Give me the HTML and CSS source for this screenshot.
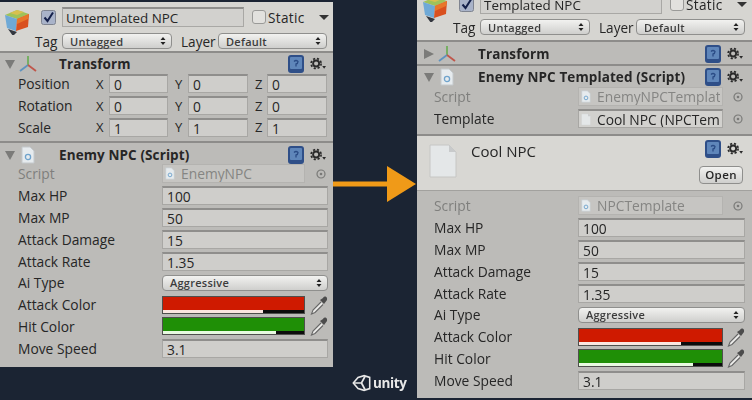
FILE: index.html
```html
<!DOCTYPE html>
<html lang="en">
<head>
<meta charset="utf-8">
<title>Unity Inspector: Untemplated vs Templated NPC</title>
<link rel="stylesheet" href="styles.css">
</head>
<body>
<svg class="defs" aria-hidden="true">
  <symbol id="cube" viewBox="0 0 26 26">
    <polygon points="1,6 13,1 25,5 13,10" fill="#9fc25a"/>
    <polygon points="6,4 13,1 20,3 13,6" fill="#d8c04f"/>
    <polygon points="1,6 13,10 12,22 3,19" fill="#6fa9d6"/>
    <polygon points="13,10 25,5 24,18 12,22" fill="#d9501f"/>
    <polygon points="13,10 25,5 24,10 13,15" fill="#e8762a"/>
    <polygon points="4,20 13,23 9,27" fill="#33373f"/>
  </symbol>
  <symbol id="check" viewBox="0 0 15 15">
    <rect x=".5" y=".5" width="14" height="14" rx="2" fill="#a9b3c9" stroke="#7f8490"/>
    <path d="M3.5 7.5 6.5 11 12 2.5" fill="none" stroke="#14204a" stroke-width="2"/>
  </symbol>
  <symbol id="tri-down" viewBox="0 0 10 10"><polygon points="0,1 10,1 5,10" fill="#7b7b79"/></symbol>
  <symbol id="tri-right" viewBox="0 0 10 10"><polygon points="0,0 10,5 0,10" fill="#7b7b79"/></symbol>
  <symbol id="axes" viewBox="0 0 18 18">
    <path d="M9 10V1" stroke="#6fae5a" stroke-width="1.8"/>
    <path d="M9 10 1 16" stroke="#5f93bf" stroke-width="1.8"/>
    <path d="M9 10 17 16" stroke="#c0564a" stroke-width="1.8"/>
  </symbol>
  <symbol id="script" viewBox="0 0 14 18">
    <path d="M1 1H9L13 5V17H1Z" fill="#e6ebee" stroke="#c4c9cc"/>
    <circle cx="7" cy="11" r="2.600" fill="none" stroke="#6fa3cc" stroke-width="1.300"/>
  </symbol>
  <symbol id="help" viewBox="0 0 16 18">
    <rect x="0" y="0" width="16" height="18" rx="3" fill="#2f4f88"/>
    <rect x="2" y="2" width="12" height="12" rx="1" fill="#5f86ba"/>
    <path d="M6 6.500Q8 4.500 10 6.500Q10 8.500 8 9V11.500" fill="none" stroke="#2b4c86" stroke-width="1.300"/>
  </symbol>
  <symbol id="gear" viewBox="0 0 17 14">
    <circle cx="6.500" cy="6.500" r="3.200" fill="none" stroke="#2a2a2a" stroke-width="2"/>
    <circle cx="6.500" cy="6.500" r="5.300" fill="none" stroke="#2a2a2a" stroke-width="1.800" stroke-dasharray="2.300 1.900"/>
    <polygon points="13,9 17,9 15,12" fill="#2a2a2a"/>
  </symbol>
  <symbol id="updown" viewBox="0 0 6 10">
    <path d="M0.500 4 3 1 5.500 4ZM0.500 6 3 9 5.500 6Z" fill="#222"/>
  </symbol>
  <symbol id="dropper" viewBox="0 0 18 20">
    <path d="M11 7 3 15 1.500 19 5 17.500 13 9.500" fill="#ececea" stroke="#666" stroke-width="1.100"/>
    <path d="M10 5 14 9 17 5Q17.500 2 15.500 1.500Q13.500 1 13 3Z" fill="#4c4c4c"/>
  </symbol>
  <symbol id="target" viewBox="0 0 10 10">
    <circle cx="5" cy="5" r="4" fill="none" stroke="#7a7a78" stroke-width="1.200"/>
    <circle cx="5" cy="5" r="1.300" fill="#7a7a78"/>
  </symbol>
  <symbol id="page" viewBox="0 0 28 34">
    <path d="M1 1H20L27 8V33H1Z" fill="#e4e7e8" stroke="#c6c6c4"/>
    <path d="M20 1 27 8H20Z" fill="#c8cacb"/>
  </symbol>
</svg>

<main class="stage">
  <section class="panel panel-left">
    <header class="go-header">
      <div class="go-top">
        <svg class="i-cube"><use href="#cube"/></svg>
        <div class="go-fields">
          <div class="name-row">
            <svg class="i-check"><use href="#check"/></svg>
            <div class="name-field">Untemplated NPC</div>
            <span class="static-box"></span>
            <span class="static-label">Static</span>
            <span class="caret"></span>
          </div>
        </div>
      </div>
      <div class="tag-row">
        <span class="tag-label">Tag</span>
        <div class="select sel-tag">Untagged<svg class="i-ud"><use href="#updown"/></svg></div>
        <span class="layer-label">Layer</span>
        <div class="select sel-layer">Default<svg class="i-ud"><use href="#updown"/></svg></div>
      </div>
    </header>

    <div class="comp comp-transform">
      <div class="comp-head">
        <svg class="i-tri"><use href="#tri-down"/></svg>
        <svg class="i-axes"><use href="#axes"/></svg>
        <span class="comp-title">Transform</span>
        <svg class="i-help"><use href="#help"/></svg>
        <svg class="i-gear"><use href="#gear"/></svg>
      </div>
      <div class="row"><span class="lbl">Position</span><div class="xyz"><span class="ax">X</span><div class="field">0</div><span class="ax">Y</span><div class="field">0</div><span class="ax">Z</span><div class="field">0</div></div></div>
      <div class="row"><span class="lbl">Rotation</span><div class="xyz"><span class="ax">X</span><div class="field">0</div><span class="ax">Y</span><div class="field">0</div><span class="ax">Z</span><div class="field">0</div></div></div>
      <div class="row"><span class="lbl">Scale</span><div class="xyz"><span class="ax">X</span><div class="field">1</div><span class="ax">Y</span><div class="field">1</div><span class="ax">Z</span><div class="field">1</div></div></div>
    </div>

    <div class="comp comp-script">
      <div class="comp-head">
        <svg class="i-tri"><use href="#tri-down"/></svg>
        <svg class="i-script"><use href="#script"/></svg>
        <span class="comp-title">Enemy NPC (Script)</span>
        <svg class="i-help"><use href="#help"/></svg>
        <svg class="i-gear"><use href="#gear"/></svg>
      </div>
      <div class="row dim"><span class="lbl">Script</span><div class="val val-obj"><div class="objfield"><svg class="i-mini"><use href="#script"/></svg><span>EnemyNPC</span></div><svg class="i-target"><use href="#target"/></svg></div></div>
      <div class="row"><span class="lbl">Max HP</span><div class="val"><div class="field">100</div></div></div>
      <div class="row"><span class="lbl">Max MP</span><div class="val"><div class="field">50</div></div></div>
      <div class="row"><span class="lbl">Attack Damage</span><div class="val"><div class="field">15</div></div></div>
      <div class="row"><span class="lbl">Attack Rate</span><div class="val"><div class="field">1.35</div></div></div>
      <div class="row"><span class="lbl">Ai Type</span><div class="val"><div class="select sel-full">Aggressive<svg class="i-ud"><use href="#updown"/></svg></div></div></div>
      <div class="row"><span class="lbl">Attack Color</span><div class="val val-obj"><div class="swatch swatch-red"><span class="alpha alpha-red"></span></div><svg class="i-dropper"><use href="#dropper"/></svg></div></div>
      <div class="row"><span class="lbl">Hit Color</span><div class="val val-obj"><div class="swatch swatch-green"><span class="alpha alpha-green"></span></div><svg class="i-dropper"><use href="#dropper"/></svg></div></div>
      <div class="row"><span class="lbl">Move Speed</span><div class="val"><div class="field">3.1</div></div></div>
    </div>
  </section>

  <div class="middle">
    <svg class="arrow" viewBox="0 0 84 38" aria-hidden="true">
      <rect x="0" y="16.500" width="56" height="5" fill="#f09a18"/>
      <polygon points="54,1 83,19 54,37" fill="#f09a18"/>
    </svg>
    <div class="unity">
      <svg class="i-unity" viewBox="0 0 22 20" aria-hidden="true">
        <path d="M1.500 10 7 3.500 14 1.500 20.500 3.500 20.500 16.500 14 18.500 7 16.500Z" fill="none" stroke="#e8e8e8" stroke-width="1.800"/>
        <path d="M1.500 10H11L15 2.500M11 10 15 17.500" fill="none" stroke="#e8e8e8" stroke-width="2"/>
      </svg>
      <span class="unity-word">unity</span>
    </div>
  </div>

  <section class="panel panel-right">
    <header class="go-header">
      <div class="go-top">
        <svg class="i-cube"><use href="#cube"/></svg>
        <div class="go-fields">
          <div class="name-row">
            <svg class="i-check"><use href="#check"/></svg>
            <div class="name-field">Templated NPC</div>
            <span class="static-box"></span>
            <span class="static-label">Static</span>
            <span class="caret"></span>
          </div>
        </div>
      </div>
      <div class="tag-row">
        <span class="tag-label">Tag</span>
        <div class="select sel-tag">Untagged<svg class="i-ud"><use href="#updown"/></svg></div>
        <span class="layer-label">Layer</span>
        <div class="select sel-layer">Default<svg class="i-ud"><use href="#updown"/></svg></div>
      </div>
    </header>

    <div class="comp comp-collapsed">
      <div class="comp-head">
        <svg class="i-tri"><use href="#tri-right"/></svg>
        <svg class="i-axes"><use href="#axes"/></svg>
        <span class="comp-title">Transform</span>
        <svg class="i-help"><use href="#help"/></svg>
        <svg class="i-gear"><use href="#gear"/></svg>
      </div>
    </div>

    <div class="comp comp-templated">
      <div class="comp-head">
        <svg class="i-tri"><use href="#tri-down"/></svg>
        <svg class="i-script"><use href="#script"/></svg>
        <span class="comp-title">Enemy NPC Templated (Script)</span>
        <svg class="i-help"><use href="#help"/></svg>
        <svg class="i-gear"><use href="#gear"/></svg>
      </div>
      <div class="row dim"><span class="lbl">Script</span><div class="val val-obj"><div class="objfield"><svg class="i-mini"><use href="#script"/></svg><span class="clip">EnemyNPCTemplate</span></div><svg class="i-target"><use href="#target"/></svg></div></div>
      <div class="row"><span class="lbl">Template</span><div class="val val-obj"><div class="objfield obj-live"><svg class="i-mini"><use href="#page"/></svg><span class="clip">Cool NPC (NPCTemplate)</span></div><svg class="i-target"><use href="#target"/></svg></div></div>
    </div>

    <div class="asset-head">
      <svg class="i-page"><use href="#page"/></svg>
      <span class="asset-title">Cool NPC</span>
      <div class="asset-tools">
        <div class="asset-icons">
          <svg class="i-help"><use href="#help"/></svg>
          <svg class="i-gear"><use href="#gear"/></svg>
        </div>
        <div class="open-btn">Open</div>
      </div>
    </div>

    <div class="comp comp-asset">
      <div class="row dim"><span class="lbl">Script</span><div class="val val-obj"><div class="objfield"><svg class="i-mini"><use href="#script"/></svg><span>NPCTemplate</span></div><svg class="i-target"><use href="#target"/></svg></div></div>
      <div class="row"><span class="lbl">Max HP</span><div class="val"><div class="field">100</div></div></div>
      <div class="row"><span class="lbl">Max MP</span><div class="val"><div class="field">50</div></div></div>
      <div class="row"><span class="lbl">Attack Damage</span><div class="val"><div class="field">15</div></div></div>
      <div class="row"><span class="lbl">Attack Rate</span><div class="val"><div class="field">1.35</div></div></div>
      <div class="row"><span class="lbl">Ai Type</span><div class="val"><div class="select sel-full">Aggressive<svg class="i-ud"><use href="#updown"/></svg></div></div></div>
      <div class="row"><span class="lbl">Attack Color</span><div class="val val-obj"><div class="swatch swatch-red"><span class="alpha alpha-red"></span></div><svg class="i-dropper"><use href="#dropper"/></svg></div></div>
      <div class="row"><span class="lbl">Hit Color</span><div class="val val-obj"><div class="swatch swatch-green"><span class="alpha alpha-green"></span></div><svg class="i-dropper"><use href="#dropper"/></svg></div></div>
      <div class="row"><span class="lbl">Move Speed</span><div class="val"><div class="field">3.1</div></div></div>
    </div>
  </section>
</main>
</body>
</html>
```

FILE: styles.css
```css
* { box-sizing: border-box; }
html, body { margin: 0; padding: 0; }
body {
  width: 752px;
  height: 400px;
  overflow: hidden;
  background: #1b2433;
  font-family: "Open Sans", "DejaVu Sans", sans-serif;
  font-size: 13.8px;
  color: #262626;
}
.defs { display: block; width: 0; height: 0; overflow: hidden; }

.stage {
  display: flex;
  width: 752px;
  height: 400px;
  filter: blur(0.55px);
}

.panel {
  flex: none;
  overflow: hidden;
  background: #bcbbb8;
}
.panel-left {
  width: 333px;
  height: 365px;
  margin-top: 2px;
}
.panel-right {
  width: 335px;
  height: 398px;
}

.middle {
  flex: none;
  width: 84px;
  display: flex;
  flex-direction: column;
  align-items: flex-start;
}
.arrow {
  display: block;
  width: 84px;
  height: 38px;
  margin-top: 165px;
}
.unity {
  display: flex;
  align-items: center;
  gap: 2px;
  margin-top: auto;
  margin-bottom: 8px;
  margin-left: 19px;
  color: #e8e8e8;
}
.i-unity { width: 19px; height: 18px; flex: none; }
.unity-word { font-size: 13.5px; font-weight: 700; letter-spacing: -0.4px; line-height: 18px; }

/* GameObject header */
.go-header {
  display: flow-root;
  background: #d6d5d1;
  border-bottom: 2px solid #8d8c8a;
  height: 51px;
  padding: 5px 5px 0 4px;
}
.panel-right .go-header {
  height: 42px;
  padding: 0 7px 0 5px;
}
.panel-right .go-top { margin-top: -6px; }
.panel-right .tag-row { margin-top: 1px; }
.go-top { display: flex; height: 24px; }
.i-cube { width: 26px; height: 26px; flex: none; margin-top: 2px; }
.go-fields { flex: 1; }
.name-row { display: flex; align-items: center; height: 20px; }
.i-check { width: 15px; height: 15px; flex: none; margin-left: 11px; }
.name-field {
  width: 182px;
  height: 20px;
  margin-left: 6px;
  padding-left: 3px;
  line-height: 19px;
  font-size: 13.4px;
  background: #d2d1ce;
  border: 1px solid #a9a8a5;
  border-top: 2px solid #8f8e8c;
}
.static-box {
  width: 14px;
  height: 14px;
  margin-left: 8px;
  border: 1px solid #9a9a98;
  border-radius: 3px;
  background: #e2e1de;
}
.static-label { margin-left: 2px; width: 40px; font-size: 13.6px; letter-spacing: .3px; }
.caret {
  margin-left: 11px;
  width: 0;
  height: 0;
  border: 5px solid transparent;
  border-top: 5px solid #333;
  border-bottom: 0;
}
.tag-row { display: flex; align-items: center; height: 16px; margin-top: 2px; }
.tag-label { width: 54px; padding-left: 31px; font-size: 13.6px; margin-right: 4px; }
.layer-label { width: 37px; margin-left: 9px; font-size: 13.6px; }
.select {
  display: flex;
  align-items: center;
  justify-content: space-between;
  height: 16px;
  padding: 0 5px 0 7px;
  font-size: 11px;
  font-weight: 600;
  letter-spacing: .25px;
  color: #3c3c3c;
  background: linear-gradient(#f2f2f0, #cfcfcd);
  border: 1px solid #8f8f8d;
  border-radius: 4px;
}
.sel-tag { width: 110px; }
.sel-layer { width: 109px; }
.sel-full { width: 100%; }
.i-ud { width: 6px; height: 10px; flex: none; }

/* Components */
.comp { border-bottom: 2px solid #8d8c8a; }
.comp-transform { height: 90px; }
.comp-script { border-bottom: 0; }
.comp-collapsed { height: 24px; }
.comp-templated { height: 70px; }
.comp-asset { border-bottom: 0; padding-top: 4px; }
.comp-head {
  display: flex;
  align-items: center;
  height: 21px;
  padding: 0 7px 0 5px;
}
.comp-transform .comp-head { height: 20px; padding-top: 2px; }
.comp-script .comp-head { height: 20px; padding-top: 3px; }
.panel-right .comp-head { padding: 0 9px 0 7px; }
.panel-right .comp-collapsed .comp-head { height: 22px; padding-top: 2px; }
.panel-right .comp-templated .comp-head { height: 20px; padding-top: 1px; }
.i-tri { width: 10px; height: 10px; flex: none; }
.i-axes { width: 18px; height: 18px; flex: none; margin-left: 4px; }
.i-script { width: 14px; height: 18px; flex: none; margin-left: 6px; }
.comp-title {
  flex: 1;
  margin-left: 22px;
  font-size: 13.5px;
  font-weight: 700;
  letter-spacing: .1px;
}
.comp-head .i-script + .comp-title { margin-left: 24px; }
.i-help { width: 16px; height: 18px; flex: none; }
.i-gear { width: 16px; height: 14px; flex: none; margin-left: 6px; }

.row {
  display: flex;
  align-items: center;
  height: 21.8px;
  padding-left: 18px;
}
.row.dim { color: #7f7f7d; }
.lbl { flex: none; width: 144px; }
.val { flex: 1; padding-right: 5px; }
.panel-right .row { padding-left: 17px; }
.panel-right .val { padding-right: 7px; }
.val-obj { display: flex; align-items: center; justify-content: space-between; }
.field {
  height: 19px;
  padding-left: 4px;
  line-height: 18px;
  background: #cfcecb;
  border: 1px solid #a8a7a4;
  border-top: 2px solid #8f8e8c;
}
.xyz {
  display: grid;
  grid-template-columns: 13px 59px 20px 60px 19px 60px;
  margin-left: -66px;
  align-items: center;
}
.ax { font-size: 13px; }
.ax ~ .ax { padding-left: 7px; }

.objfield {
  display: flex;
  align-items: center;
  width: 143px;
  height: 19px;
  padding: 0 2px;
  background: #c6c5c2;
  border: 1px solid #b4b3b0;
  color: #858583;
  overflow: hidden;
  white-space: nowrap;
}
.panel-right .objfield { width: 145px; }
.obj-live {
  color: #262626;
  background: #d2d1ce;
  border: 1px solid #a8a7a4;
  border-top: 2px solid #8f8e8c;
}
.i-mini { width: 10px; height: 13px; flex: none; margin-right: 6px; }
.clip { overflow: hidden; }
.i-target { width: 10px; height: 10px; flex: none; margin-right: 2px; }

.swatch {
  display: flex;
  align-items: flex-end;
  width: 143px;
  height: 18px;
  border: 1px solid #4f4f4d;
  background-color: #0c0c0c;
}
.panel-right .swatch { width: 145px; }
.swatch-red { background-image: linear-gradient(#cf1a00 0 13px, #0c0c0c 13px); }
.swatch-green { background-image: linear-gradient(#1f8f06 0 13px, #0c0c0c 13px); }
.alpha { display: block; height: 3px; }
.alpha-red { width: 71%; background: #fbe6e0; }
.alpha-green { width: 80%; background: #e8fbe0; }
.i-dropper { width: 18px; height: 20px; flex: none; }

/* Asset header */
.asset-head {
  display: flex;
  height: 55px;
  padding: 0 9px 0 12px;
  background: #d8d7d3;
  border-bottom: 1px solid #a2a19e;
}
.i-page { width: 28px; height: 34px; flex: none; margin-top: 8px; }
.asset-title { flex: 1; margin-left: 14px; margin-top: 3px; font-size: 15px; line-height: 24px; }
.asset-tools { display: flex; flex-direction: column; align-items: flex-end; }
.asset-icons { display: flex; align-items: center; margin-top: 4px; }
.open-btn {
  margin-top: 8px;
  width: 44px;
  height: 18px;
  text-align: center;
  font-size: 11.5px;
  font-weight: 600;
  line-height: 16px;
  letter-spacing: .4px;
  background: linear-gradient(#f2f2f0, #cfcfcd);
  border: 1px solid #8f8f8d;
  border-radius: 4px;
}
```
